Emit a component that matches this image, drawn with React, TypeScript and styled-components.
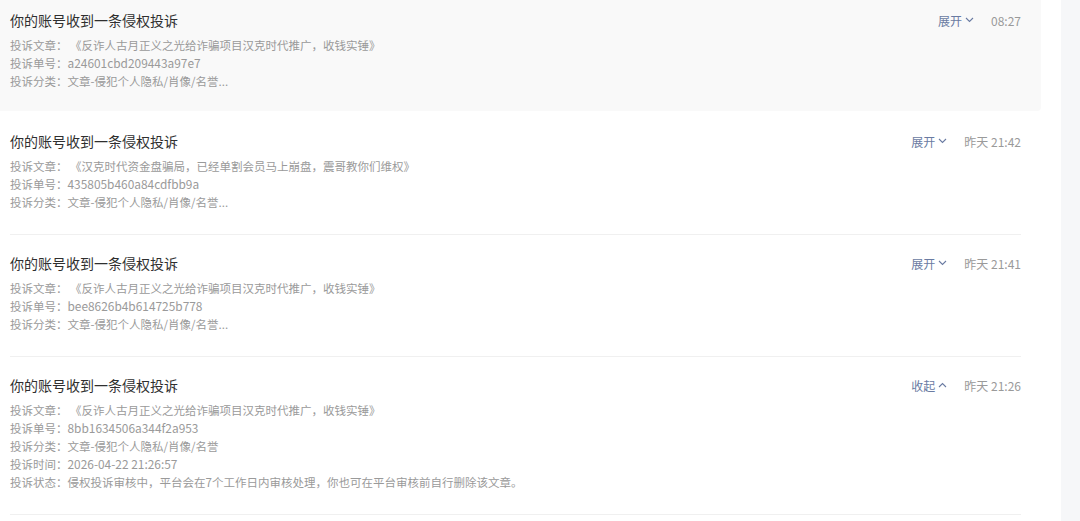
import styled, { createGlobalStyle } from 'styled-components';

interface Complaint {
    article: string;
    id: string;
    category: string;
    time: string;
    expanded?: boolean;
    submittedAt?: string;
    status?: string;
}

const complaints: Complaint[] = [
    {
        article: '《反诈人古月正义之光给诈骗项目汉克时代推广，收钱实锤》',
        id: 'a24601cbd209443a97e7',
        category: '文章-侵犯个人隐私/肖像/名誉...',
        time: '08:27',
    },
    {
        article: '《汉克时代资金盘骗局，已经单割会员马上崩盘，震哥教你们维权》',
        id: '435805b460a84cdfbb9a',
        category: '文章-侵犯个人隐私/肖像/名誉...',
        time: '昨天 21:42',
    },
    {
        article: '《反诈人古月正义之光给诈骗项目汉克时代推广，收钱实锤》',
        id: 'bee8626b4b614725b778',
        category: '文章-侵犯个人隐私/肖像/名誉...',
        time: '昨天 21:41',
    },
    {
        article: '《反诈人古月正义之光给诈骗项目汉克时代推广，收钱实锤》',
        id: '8bb1634506a344f2a953',
        category: '文章-侵犯个人隐私/肖像/名誉',
        time: '昨天 21:26',
        expanded: true,
        submittedAt: '2026-04-22 21:26:57',
        status: '侵权投诉审核中，平台会在7个工作日内审核处理，你也可在平台审核前自行删除该文章。',
    },
];

const GlobalStyle = createGlobalStyle`
    html, body {
        margin: 0;
        padding: 0;
        background: #ffffff;
        font-family: "Noto Sans CJK SC", "Noto Sans", sans-serif;
    }
`;

const Page = styled.div`
    display: flex;
    width: 1080px;
    height: 521px;
    overflow: hidden;
`;

const Main = styled.div`
    width: 1061px;
    flex-shrink: 0;
    background: #ffffff;
`;

const Sidebar = styled.div`
    flex: 1;
    background: #f6f7f9;
`;

const List = styled.div`
    width: 1041px;
    display: flex;
    flex-direction: column;
`;

const Item = styled.div<{ $active?: boolean }>`
    padding: 10px 20px 0 10px;
    margin-bottom: ${(p) => (p.$active ? '10px' : '8px')};
    background: ${(p) => (p.$active ? '#f9f9f9' : 'transparent')};
    border-radius: 0 0 4px 0;
`;

const Body = styled.div<{ $active?: boolean }>`
    padding-bottom: ${(p) => (p.$active ? '21px' : '23px')};
    border-bottom: ${(p) => (p.$active ? 'none' : '1px solid #f0f0f0')};
`;

const Header = styled.div`
    display: flex;
    align-items: center;
    justify-content: space-between;
    height: 20px;
    margin-bottom: 6px;
`;

const Title = styled.div`
    font-size: 14px;
    line-height: 20px;
    color: #2f2f2f;
`;

const Meta = styled.div`
    display: flex;
    align-items: center;
    font-size: 12px;
`;

const Toggle = styled.span`
    display: inline-flex;
    align-items: center;
    gap: 3px;
    color: #6a7ba2;
    cursor: pointer;
`;

const Time = styled.span`
    margin-left: 17px;
    color: #9a9a9a;
`;

const Line = styled.div`
    font-size: 11.5px;
    line-height: 18px;
    color: #9a9a9a;
`;

const Code = styled.span`
    font-size: 11.9px;
`;

const Chevron = ({ up }: { up?: boolean }) => (
    <svg width="9" height="6" viewBox="0 0 9 6" fill="none">
        <polyline
            points={up ? '1,5 4.5,1.5 8,5' : '1,1 4.5,4.5 8,1'}
            stroke="#6a7ba2"
            strokeWidth="1.1"
        />
    </svg>
);

const App = () => {
    return (
        <>
            <GlobalStyle />
            <Page>
                <Main>
                    <List>
                        {complaints.map((c, i) => (
                            <Item key={c.id} $active={i === 0}>
                                <Body $active={i === 0}>
                                    <Header>
                                        <Title>你的账号收到一条侵权投诉</Title>
                                        <Meta>
                                            <Toggle>
                                                {c.expanded ? '收起' : '展开'}
                                                <Chevron up={c.expanded} />
                                            </Toggle>
                                            <Time>{c.time}</Time>
                                        </Meta>
                                    </Header>
                                    <Line>投诉文章： {c.article}</Line>
                                    <Line>
                                        投诉单号：<Code>{c.id}</Code>
                                    </Line>
                                    <Line>投诉分类：{c.category}</Line>
                                    {c.submittedAt && (
                                        <Line>
                                            投诉时间：<Code>{c.submittedAt}</Code>
                                        </Line>
                                    )}
                                    {c.status && <Line>投诉状态：{c.status}</Line>}
                                </Body>
                            </Item>
                        ))}
                    </List>
                </Main>
                <Sidebar />
            </Page>
        </>
    );
};

export default App;
